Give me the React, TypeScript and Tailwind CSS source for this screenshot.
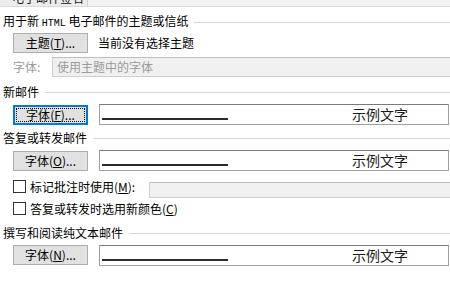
import React from 'react';

const Heading = ({ children }: { children: React.ReactNode }) => (
  <div className="flex items-center h-[16px] pl-[3px]">
    <span className="text-[12px] leading-[16px] text-black whitespace-nowrap">{children}</span>
    <div className="flex-1 ml-[6px] h-px bg-[#d9d9d9]" />
  </div>
);

const Btn = ({ text, hot, focused }: { text: string; hot: string; focused?: boolean }) => {
  const label = (
    <span className="text-[12px] leading-[14px] text-black whitespace-nowrap">
      {text}(<span className="underline underline-offset-[1px]">{hot}</span>)...
    </span>
  );
  if (focused) {
    return (
      <div className="w-[75px] h-[20px] shrink-0 border-2 border-[#0078d7] bg-[#e1e1e1] p-px">
        <div className="w-full h-full border border-dotted border-black flex items-center justify-center">
          {label}
        </div>
      </div>
    );
  }
  return (
    <div className="w-[75px] h-[20px] shrink-0 border border-[#adadad] bg-[#e1e1e1] flex items-center justify-center">
      {label}
    </div>
  );
};

const Sample = () => (
  <div className="flex-1 mr-px h-[21px] border border-[#a0a0a0] border-t-[#7a7a7a] bg-white flex items-start">
    <div className="ml-[2px] mt-[13px] w-[126px] h-[2px] bg-[#2b2b2b]" />
    <span className="ml-auto mr-[40px] mt-px text-[14px] leading-[17px] text-[#1a1a1a]">示例文字</span>
  </div>
);

const Check = ({ children }: { children: React.ReactNode }) => (
  <div className="w-[13px] h-[13px] shrink-0 border border-[#333333] bg-white">{children}</div>
);

export default function App() {
  return (
    <div className="w-[450px] h-[300px] bg-white overflow-hidden font-['Noto_Sans_CJK_SC','Noto_Sans',sans-serif] text-black">
      {/* clipped tab strip */}
      <div className="h-[7px] flex bg-[#f3f3f3] border-b border-[#dadada] overflow-hidden">
        <div className="w-[88px] border-r border-[#d0d0d0] bg-[#ececec] pl-[12px]">
          <div className="-mt-[9px] text-[12px] leading-[14px] text-[#111]">电子邮件签名</div>
        </div>
        <div className="flex-1" />
      </div>

      <div className="pt-[7px]">
        <Heading>
          用于新 <span className="font-['Liberation_Mono',monospace] text-[10px]">HTML</span> 电子邮件的主题或信纸
        </Heading>
      </div>

      <div className="mt-[3px] pl-[13px] flex items-center">
        <Btn text="主题" hot="T" />
        <span className="ml-[10px] text-[12px] leading-[16px]">当前没有选择主题</span>
      </div>

      <div className="mt-[4px] pl-[13px] flex items-center">
        <span className="w-[39px] text-[12px] leading-[16px] text-[#9a9a9a]">字体:</span>
        <div className="flex-1 h-[20px] bg-[#f0f0f0] border border-[#cfcfcf] border-t-[#bdbdbd] border-r-0 flex items-center pl-[4px]">
          <span className="text-[12px] leading-[16px] text-[#9a9a9a]">使用主题中的字体</span>
        </div>
      </div>

      <div className="mt-[7px]">
        <Heading>新邮件</Heading>
      </div>

      <div className="mt-[4px] pl-[13px] flex items-start gap-[11px]">
        <div className="mt-px">
          <Btn text="字体" hot="F" focused />
        </div>
        <Sample />
      </div>

      <div className="mt-[5px]">
        <Heading>答复或转发邮件</Heading>
      </div>

      <div className="mt-[4px] pl-[13px] flex items-start gap-[11px]">
        <div className="mt-px">
          <Btn text="字体" hot="O" />
        </div>
        <Sample />
      </div>

      <div className="mt-[9px] pl-[13px] flex items-start">
        <Check />
        <span className="ml-[4px] text-[12px] leading-[14px] whitespace-nowrap">
          标记批注时使用(<span className="underline">M</span>):
        </span>
        <div className="ml-auto w-[301px] mt-[2px] h-[16px] bg-[#f0f0f0] border border-[#cfcfcf] border-t-[#bdbdbd] border-r-0" />
      </div>

      <div className="mt-[4px] pl-[13px] flex items-start">
        <Check />
        <span className="ml-[4px] text-[12px] leading-[14px] whitespace-nowrap">
          答复或转发时选用新颜色(<span className="underline">C</span>)
        </span>
      </div>

      <div className="mt-[9px]">
        <Heading>撰写和阅读纯文本邮件</Heading>
      </div>

      <div className="mt-[4px] pl-[13px] flex items-start gap-[11px]">
        <Btn text="字体" hot="N" />
        <Sample />
      </div>
    </div>
  );
}
